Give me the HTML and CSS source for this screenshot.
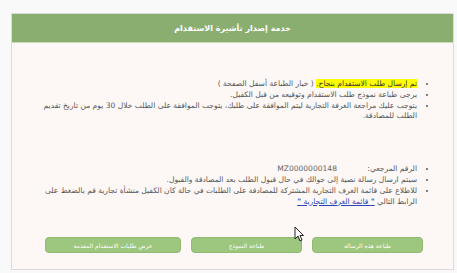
FILE: index.html
```html
<!DOCTYPE html>
<html lang="ar" dir="rtl">
<head>
    <meta charset="UTF-8">
    <meta name="viewport" content="width=device-width, initial-scale=1.0">
    <title>خدمة إصدار تأشيرة الاستقدام</title>
    <link rel="stylesheet" href="styles.css">
</head>
<body>
    <div class="panel">
        <div class="panel-head">خدمة إصدار تأشيرة الاستقدام</div>

        <div class="panel-body">
            <!-- نتيجة الطلب -->
            <ul class="notes">
                <li><span class="mark">تم إرسال طلب الاستقدام بنجاح.</span> ( خيار الطباعة أسفل الصفحة )</li>
                <li>يرجى طباعة نموذج طلب الاستقدام وتوقيعه من قبل الكفيل.</li>
                <li>يتوجب عليك مراجعة الغرفة التجارية ليتم الموافقة على طلبك، يتوجب الموافقة على الطلب خلال 30 يوم من تاريخ تقديم الطلب للمصادقة.</li>
            </ul>

            <ul class="notes second">
                <li>الرقم المرجعي: <span class="ref">MZ0000000148</span></li>
                <li>سيتم ارسال رسالة نصية إلى جوالك في حال قبول الطلب بعد المصادقة والقبول.</li>
                <li>للاطلاع على قائمة الغرف التجارية المشتركة للمصادقة على الطلبات في حالة كان الكفيل منشأة تجارية قم بالضغط على<br>الرابط التالي <a href="#" class="link"><b>"</b> قائمة الغرف التجارية <b>"</b></a></li>
            </ul>

            <div class="actions">
                <button class="btn">طباعة هذه الرسالة</button>
                <button class="btn">طباعة النموذج</button>
                <button class="btn wide">عرض طلبات الاستقدام المقدمة</button>
            </div>
        </div>
    </div>

    <!-- مؤشر الفأرة -->
    <svg class="cursor" width="10" height="16" viewBox="0 0 10 16">
        <path d="M1 1 L1 13 L4 10 L6 15 L8 14 L6 9.5 L9.5 9.5 Z" fill="#fff" stroke="#222" stroke-width="1"/>
    </svg>
</body>
</html>
```

FILE: styles.css
```css
body {
    margin: 0;
    padding: 13px 3px 0 11px;
    background: #f9f9f9;
    font-family: "DejaVu Sans", sans-serif;
    position: relative;
    height: 273px;
    box-sizing: border-box;
}

.panel {
    width: 443px;
    height: 257px;
    box-sizing: border-box;
    border: 1px solid #dcdcdc;
    background: #fdf8f5;
    display: flex;
    flex-direction: column;
}

.panel-head {
    height: 28px;
    background: #8aae6f;
    border-bottom: 1px solid #c9ddb8;
    color: #fff;
    font-size: 8px;
    font-weight: bold;
    display: flex;
    align-items: center;
    justify-content: center;
}

.panel-body {
    flex: 1;
    display: flex;
    flex-direction: column;
    padding: 0 30px 0 10px;
}

.notes {
    margin: 0;
    padding: 0 6px 0 0;
    font-size: 7.55px;
    line-height: 10.8px;
    color: #555;
}

.notes:first-child {
    margin-top: 36px;
}

.notes.second {
    margin-top: 42px;
}

.mark {
    background: #ffff00;
    color: #333;
}

.ref {
    margin-right: 28px;
    color: #666;
}

.link {
    color: #2b45b8;
    text-decoration: underline;
}

.actions {
    display: flex;
    gap: 10px;
    margin-top: auto;
    margin-bottom: 16px;
}

.btn {
    width: 111px;
    height: 16px;
    padding: 0;
    background: #9dc67f;
    border: 1px solid #8fbb70;
    border-radius: 4px;
    color: #fff;
    font-family: "DejaVu Sans", sans-serif;
    font-size: 6px;
    cursor: pointer;
}

.btn.wide {
    width: 136px;
}

.cursor {
    position: absolute;
    left: 294px;
    top: 226px;
}
```
